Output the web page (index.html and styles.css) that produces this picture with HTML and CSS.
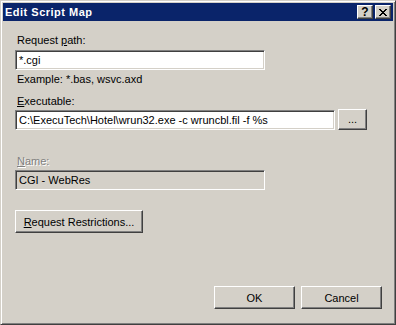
FILE: index.html
```html
<!DOCTYPE html>
<html lang="en">
<head>
  <meta charset="UTF-8" />
  <title>Edit Script Map</title>
  <link rel="stylesheet" href="styles.css">
</head>
<body>
  <div class="window">
    <div class="titlebar">
      <span class="title">Edit Script Map</span>
      <div class="title-buttons">
        <button class="cap-btn help">?</button>
        <button class="cap-btn close">
          <svg width="8" height="7" viewBox="0 0 8 7">
            <path d="M0 0h2v1h-2zM6 0h2v1h-2zM1 1h2v1h-2zM5 1h2v1h-2zM2 2h4v1h-4zM3 3h2v1h-2zM2 4h4v1h-4zM1 5h2v1h-2zM5 5h2v1h-2zM0 6h2v1h-2zM6 6h2v1h-2z" fill="#000"/>
          </svg>
        </button>
      </div>
    </div>

    <div class="content">
      <label class="field-label first">Request <u>p</u>ath:</label>
      <div class="textbox wide">*.cgi</div>
      <div class="hint">Example: *.bas, wsvc.axd</div>

      <label class="field-label exe"><u>E</u>xecutable:</label>
      <div class="exe-row">
        <div class="textbox long">C:\ExecuTech\Hotel\wrun32.exe -c wruncbl.fil -f %s</div>
        <button class="push browse">...</button>
      </div>

      <label class="field-label disabled name"><u>N</u>ame:</label>
      <div class="textbox wide readonly">CGI - WebRes</div>

      <button class="push restrictions"><u>R</u>equest Restrictions...</button>

      <div class="actions">
        <button class="push action">OK</button>
        <button class="push action">Cancel</button>
      </div>
    </div>
  </div>
</body>
</html>
```

FILE: styles.css
```css
html, body {
  margin: 0;
  padding: 0;
  background: #d4d0c8;
}

body {
  font-family: "Liberation Sans", Arial, sans-serif;
  font-size: 11px;
  color: #000;
}

.window {
  box-sizing: border-box;
  width: 396px;
  height: 325px;
  background: #d4d0c8;
  border: 1px solid;
  border-color: #d4d0c8 #404040 #404040 #d4d0c8;
  box-shadow: inset 1px 1px #fff, inset -1px -1px #808080;
  padding: 2px;
  display: flex;
  flex-direction: column;
}

.titlebar {
  height: 18px;
  background: #0a246a;
  display: flex;
  align-items: center;
  justify-content: space-between;
  padding: 0 2px 0 2px;
}

.title {
  color: #fff;
  font-weight: bold;
  font-size: 11px;
  letter-spacing: 0.5px;
}

.title-buttons {
  display: flex;
  gap: 2px;
}

.cap-btn {
  box-sizing: border-box;
  width: 16px;
  height: 14px;
  padding: 0;
  margin: 0;
  background: #d4d0c8;
  border: 1px solid;
  border-color: #fff #404040 #404040 #fff;
  box-shadow: inset -1px -1px #808080;
  display: flex;
  align-items: center;
  justify-content: center;
  font-family: "Liberation Sans", Arial, sans-serif;
  font-weight: bold;
  font-size: 12px;
  line-height: 1;
  color: #000;
}

.cap-btn.help {
  padding-bottom: 1px;
}

.content {
  flex: 1;
  display: flex;
  flex-direction: column;
  align-items: flex-start;
  padding: 0 11px 13px 12px;
}

.field-label {
  display: block;
  line-height: 13px;
  padding-left: 2px;
}

.field-label.first {
  margin-top: 13px;
  margin-bottom: 3px;
}

.field-label.exe {
  margin-top: 9px;
  margin-bottom: 2px;
}

.field-label.name {
  margin-top: 25px;
  margin-bottom: 2px;
}

.disabled {
  color: #808080;
  text-shadow: 1px 1px #fff;
}

.textbox {
  box-sizing: border-box;
  height: 20px;
  background: #fff;
  border: 1px solid;
  border-color: #808080 #fff #fff #808080;
  box-shadow: inset 1px 1px #404040, inset -1px -1px #d4d0c8;
  padding: 0 3px;
  line-height: 18px;
  white-space: nowrap;
  overflow: hidden;
}

.textbox.wide {
  width: 250px;
}

.textbox.long {
  width: 320px;
}

.textbox.readonly {
  background: #d4d0c8;
}

.hint {
  line-height: 13px;
  padding-left: 2px;
  margin-top: 3px;
}

.exe-row {
  display: flex;
  align-items: flex-start;
  gap: 3px;
}

.push {
  box-sizing: border-box;
  margin: 0;
  padding: 0;
  background: #d4d0c8;
  border: 1px solid;
  border-color: #fff #404040 #404040 #fff;
  box-shadow: inset -1px -1px #808080;
  font-family: "Liberation Sans", Arial, sans-serif;
  font-size: 11px;
  color: #000;
}

.browse {
  width: 29px;
  height: 21px;
  margin-top: -1px;
  padding-bottom: 2px;
}

.restrictions {
  margin-top: 20px;
  width: 128px;
  height: 23px;
}

.actions {
  margin-top: auto;
  align-self: flex-end;
  display: flex;
  gap: 6px;
}

.action {
  width: 81px;
  height: 23px;
}
```
